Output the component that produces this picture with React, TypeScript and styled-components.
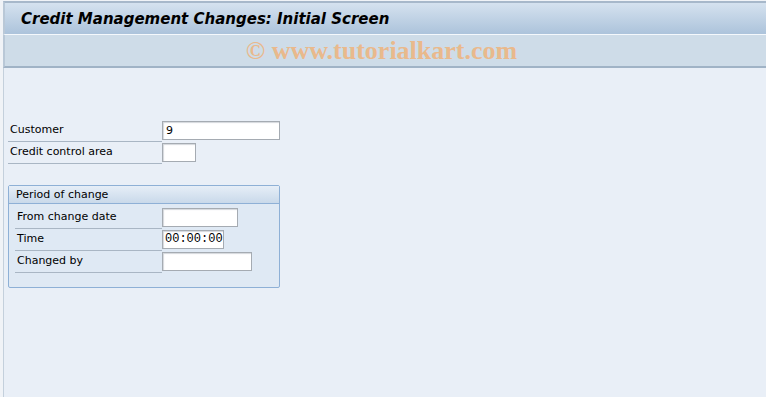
import { FC } from 'react';
import styled, { createGlobalStyle } from 'styled-components';

const GlobalStyle = createGlobalStyle`
  html, body {
    margin: 0;
    padding: 0;
    background: #f0f3f7;
  }
  body {
    font-family: Tahoma, "DejaVu Sans", Verdana, sans-serif;
  }
`

const Row: FC<{ label: string; width: number; value?: string; mono?: boolean; labelWidth: number }> = ({ label, width, value, mono, labelWidth }) => (
    <SRow>
        <SLabel $width={labelWidth}>{label}</SLabel>
        <SInput $width={width} $mono={mono}>{value}</SInput>
    </SRow>
)

export default function App() {
    return (
        <>
            <GlobalStyle />
            <SWindow>
                <STitleBar>
                    <STitle>Credit Management Changes: Initial Screen</STitle>
                </STitleBar>
                <SToolbar>
                    <SWatermark>© www.tutorialkart.com</SWatermark>
                </SToolbar>
                <SBody>
                    <SFields>
                        <Row label="Customer" width={118} value="9" labelWidth={152} />
                        <Row label="Credit control area" width={34} labelWidth={152} />
                    </SFields>
                    <SGroup>
                        <SGroupHead>Period of change</SGroupHead>
                        <SGroupBody>
                            <Row label="From change date" width={76} labelWidth={145} />
                            <Row label="Time" width={62} value="00:00:00" mono labelWidth={145} />
                            <Row label="Changed by" width={90} labelWidth={145} />
                        </SGroupBody>
                    </SGroup>
                </SBody>
            </SWindow>
        </>
    )
}

const SWindow = styled.div`
    width: 766px;
    height: 397px;
    display: flex;
    flex-direction: column;
    box-sizing: border-box;
    padding-left: 3px;
    overflow: hidden;
`
const STitleBar = styled.div`
    height: 31px;
    margin-top: 1px;
    border-top: 2px solid #a7b8ca;
    border-left: 2px solid #b9c8d7;
    border-bottom: 1px solid #f4f8fc;
    background: linear-gradient(#d5e2ef, #acc3db);
    display: flex;
    align-items: center;
    padding-left: 16px;
`
const STitle = styled.h1`
    margin: 0;
    font-family: "DejaVu Sans", Verdana, sans-serif;
    font-size: 15px;
    font-weight: bold;
    font-style: italic;
    color: #000;
`
const SToolbar = styled.div`
    height: 31px;
    background: #cedce8;
    border-left: 2px solid #b9c8d7;
    border-bottom: 2px solid #a0b3c6;
    display: flex;
    align-items: center;
    justify-content: center;
`
const SWatermark = styled.span`
    font-family: "Liberation Serif", "Times New Roman", serif;
    font-size: 26px;
    font-weight: bold;
    color: #e9b98c;
    margin-right: 8px;
`
const SBody = styled.div`
    flex: 1;
    background: #e9eff7;
    border-left: 1px solid #c4d0dc;
    padding: 51px 0 0 4px;
`
const SFields = styled.div`
    display: flex;
    flex-direction: column;
    width: 273px;
`
const SRow = styled.div`
    display: flex;
    align-items: center;
    height: 22px;
`
const SLabel = styled.div<{ $width: number }>`
    width: ${p => p.$width}px;
    height: 21px;
    line-height: 20px;
    padding-left: 2px;
    font-family: "DejaVu Sans", Tahoma, sans-serif;
    font-size: 11px;
    color: #000;
    border-bottom: 1px solid #a9b6c4;
    margin-top: 1px;
    flex-shrink: 0;
`
const SInput = styled.div<{ $width: number; $mono?: boolean }>`
    width: ${p => p.$width}px;
    height: 19px;
    box-sizing: border-box;
    background: #fff;
    border: 1px solid #a5abb2;
    box-shadow: inset 1px 1px 1px #d4d8dc;
    font-family: ${p => p.$mono ? '"Liberation Mono", "Courier New", monospace' : '"DejaVu Sans", Tahoma, sans-serif'};
    font-size: ${p => p.$mono ? '12px' : '11px'};
    line-height: 17px;
    padding-left: ${p => p.$mono ? '2px' : '3px'};
    color: #000;
    white-space: nowrap;
    overflow: hidden;
`
const SGroup = styled.div`
    margin-top: 22px;
    width: 272px;
    height: 103px;
    box-sizing: border-box;
    border: 1px solid #8eb0d6;
    border-radius: 2px;
    background: #dfe9f4;
`
const SGroupHead = styled.div`
    height: 17px;
    line-height: 17px;
    padding-left: 7px;
    font-family: "DejaVu Sans", Tahoma, sans-serif;
    font-size: 11px;
    color: #000;
    background: linear-gradient(#e6eef7, #c9d9ea);
    border-bottom: 1px solid #8eb0d6;
`
const SGroupBody = styled.div`
    padding: 2px 0 0 6px;
    display: flex;
    flex-direction: column;
`
